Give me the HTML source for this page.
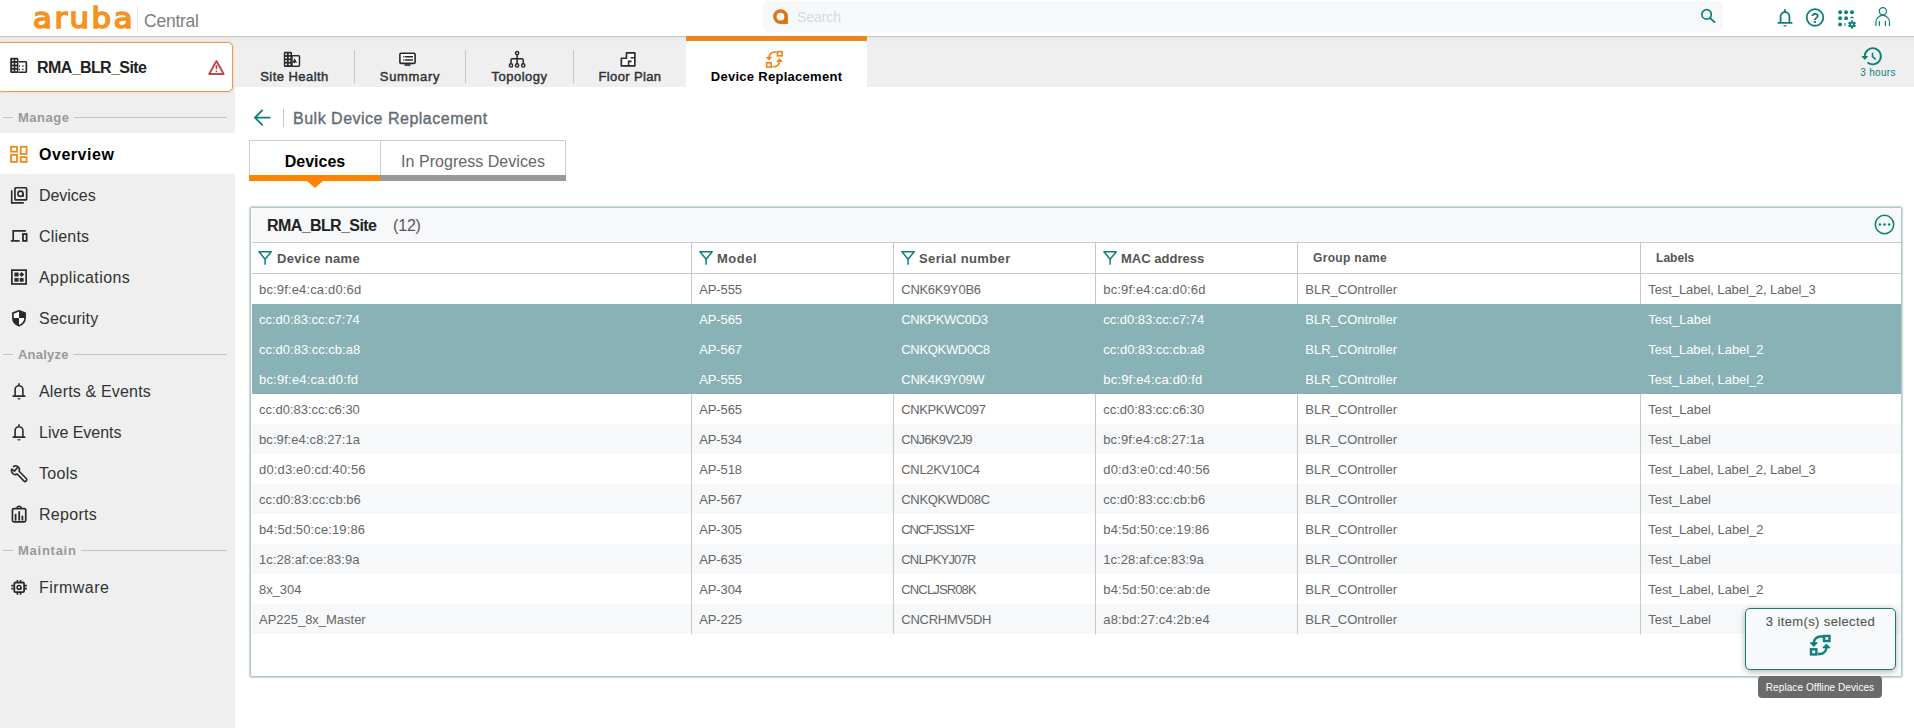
<!DOCTYPE html>
<html lang="en">
<head>
<meta charset="utf-8">
<title>Aruba Central - Bulk Device Replacement</title>
<style>
*{box-sizing:border-box;margin:0;padding:0}
html,body{width:1914px;height:728px;overflow:hidden;background:#fff}
body{font-family:"Liberation Sans",Arial,sans-serif;color:#333;position:relative;font-size:13px}
svg{display:block;overflow:visible}
.abs{position:absolute}
/* header */
#hdr{position:absolute;left:0;top:0;width:1914px;height:37px;background:#fff;border-bottom:1px solid #c4c4c4}
#logo{position:absolute;left:33px;top:0px;font-family:"DejaVu Sans","Liberation Sans",sans-serif;font-weight:normal;font-size:29px;line-height:36px;color:#f6921e;-webkit-text-stroke:1.65px #f6921e;letter-spacing:2.4px;white-space:nowrap;transform:scaleX(1.06);transform-origin:0 0}
#logosep{position:absolute;left:137px;top:6px;width:1px;height:25px;background:#e6e6e6}
#central{position:absolute;left:144px;top:9.6px;font-size:17.5px;line-height:22px;color:#7d7d7d;white-space:nowrap;letter-spacing:-.24px}
#search{position:absolute;left:763px;top:1px;width:960px;height:31px;background:#f6f8fa;border-radius:5px}
#search .ph{position:absolute;left:34px;top:1px;line-height:31px;font-size:14px;color:#d6dade}
/* sidebar */
#side{position:absolute;left:0;top:37px;width:235px;height:691px;background:#efefef linear-gradient(#e5e6e7,#efefef) no-repeat;background-size:100% 4px}
#site{position:absolute;left:-3px;top:5px;width:236px;height:50px;background:#fff;border:1px solid #e99a4a;border-radius:5px;box-shadow:0 0 2px rgba(240,150,58,.55)}
#site .nm{position:absolute;left:39px;top:0;line-height:50px;font-size:16px;font-weight:bold;color:#222;white-space:nowrap}
.sec{position:absolute;left:0;width:235px;height:32px}
.sec i{position:absolute;top:16px;height:1px;background:#c4c4c4}
.sec span{position:absolute;left:18px;top:1px;line-height:32px;font-size:13px;font-weight:bold;color:#999;white-space:nowrap}
.it{position:absolute;left:0;width:235px;height:41px}
.it.on{background:#fff}
.it span{position:absolute;left:39px;top:1px;line-height:41px;font-size:16px;color:#333;white-space:nowrap}
.it.on span{font-weight:bold;color:#000}
.it svg{position:absolute}
/* top tabs */
#tabs{position:absolute;left:235px;top:37px;width:1679px;height:50px;background:#efefef linear-gradient(#e5e6e7,#efefef) no-repeat;background-size:100% 4px}
.tab{position:absolute;top:0;height:50px;text-align:center}
.tab span{position:absolute;left:0;right:0;top:31px;line-height:18px;font-size:13px;font-weight:normal;-webkit-text-stroke:.45px #2f3338;color:#2f3338;white-space:nowrap}
.tab svg{position:absolute}
.tsep{position:absolute;top:13px;width:1px;height:33px;background:#c6c6c6}
#tabon{position:absolute;left:451px;top:-1px;width:181px;height:51px;background:#fff;border-top:5px solid #f08618}
/* main */
#main{position:absolute;left:235px;top:87px;width:1679px;height:641px;background:#fff}
#ttl{position:absolute;left:58px;top:20px;line-height:24px;font-size:16px;color:#636b73;-webkit-text-stroke:.35px #636b73;white-space:nowrap}
#itabs{position:absolute;left:14px;top:53px;width:317px;height:41px;border:1px solid #ccc;border-bottom:none}
#itabs .a{position:absolute;left:0;top:0;width:131px;height:35px;border-right:1px solid #ccc;text-align:center;line-height:42px;font-size:16px;font-weight:bold;color:#000}
#itabs .b{position:absolute;left:131px;top:0;width:184px;height:35px;text-align:center;line-height:42px;font-size:16px;color:#666}
#itabs .ba{position:absolute;left:-1px;top:34px;width:131px;height:6px;background:#ff8300}
#itabs .bb{position:absolute;left:130px;top:34px;width:186px;height:6px;background:#999}
#itabs .tri{position:absolute;left:57px;top:40px;width:0;height:0;border-left:8px solid transparent;border-right:8px solid transparent;border-top:7px solid #ff8300}
/* panel */
#panel{position:absolute;left:250px;top:207px;width:1652px;height:470px;border:1px solid #b4cac9;border-radius:2px;background:#fff;box-shadow:0 0 1px 1px rgba(140,178,177,.5)}
#pin{position:absolute;left:1px;top:0;width:1649px;height:468px}
#ptitle{position:absolute;left:0;top:0;width:1649px;height:35px;background:#f7f8f9;border-bottom:1px solid #c9c9c9}
#ptitle b{position:absolute;left:15px;top:0;line-height:35px;font-size:16px;color:#222;white-space:nowrap}
#ptitle span{position:absolute;left:141px;top:0;line-height:35px;font-size:16px;color:#555;white-space:nowrap}
.th{position:absolute;top:35px;height:31px;border-bottom:1px solid #c9c9c9;border-left:1px solid #c9c9c9;font-size:13px;font-weight:bold;color:#555;line-height:30px;white-space:nowrap}
.th span{position:absolute;top:1px}
.th svg{position:absolute;left:6.5px;top:7px}
.tr{position:absolute;left:0;width:1649px;height:30px;background:#fff}
.tr.alt{background:#f7f8f9}
.tr.sel{background:#88b2b5}
.td{position:absolute;top:0;height:30px;border-left:1px solid #c9c9c9;line-height:30px;font-size:13px;color:#666;white-space:nowrap}
.td span{position:absolute;left:7.3px;top:1px}
.tr.sel .td{color:#fff;border-left-color:transparent}
.c1{left:0;width:439px;border-left:none!important}
.c1 span{left:7px}
.c2{left:439px;width:202px}.c3{left:641px;width:202px}.c4{left:843px;width:202px}.c5{left:1045px;width:343px}.c6{left:1388px;width:261px}
#selbox{position:absolute;left:1745px;top:608px;width:151px;height:62px;background:#f7f9fa;border:1px solid #1a7a70;border-radius:5px;box-shadow:0 2px 6px rgba(0,0,0,.3)}
#selbox span{position:absolute;left:0;right:0;top:4px;text-align:center;line-height:18px;font-size:13px;color:#555;-webkit-text-stroke:.12px #555;white-space:nowrap}
#tip{position:absolute;left:1758px;top:676px;width:124px;height:22px;background:#6a6a6a;border-radius:4px;color:#fff;font-size:10px;line-height:24px;text-align:center;white-space:nowrap}
#hrs{position:absolute;left:1850px;top:67px;width:56px;text-align:center;font-size:10px;line-height:12px;color:#0c8079;white-space:nowrap}
</style>
</head>
<body>
<div id="hdr">
  <div id="logo">aruba</div>
  <div id="logosep"></div>
  <div id="central">Central</div>
  <div id="search">
    <svg class="abs" style="left:9px;top:8px" width="17" height="16" viewBox="0 0 17 16"><path d="M8.500.2a7.400 7.400 0 1 0 0 14.800h7.400V7.600A7.400 7.400 0 0 0 8.500.2zm0 3.500a3.900 3.900 0 1 1 0 7.800 3.900 3.900 0 0 1 0-7.800z" fill="#e07414" fill-rule="evenodd"/></svg>
    <div class="ph" style="letter-spacing:-.06px">Search</div>
    <svg class="abs" style="left:937px;top:8px" width="16" height="16" viewBox="0 0 16 16"><circle cx="6.600" cy="5.400" r="4.700" fill="none" stroke="#0c8079" stroke-width="1.700"/><path d="M9.900 8.900L14.500 13.100" stroke="#0c8079" stroke-width="1.900" stroke-linecap="round"/></svg>
  </div>
  <!-- bell -->
  <svg class="abs" style="left:1777px;top:8px" width="16" height="19" viewBox="0 0 16 19"><path d="M8 1.800v1.200M3.600 14.200V8.400a4.400 4.400 0 0 1 8.800 0v5.800" fill="none" stroke="#0c8079" stroke-width="1.800" stroke-linecap="round"/><path d="M1.300 14.900h13.400" stroke="#0c8079" stroke-width="1.800" stroke-linecap="round"/><path d="M6.200 17.300h3.600c-.3 1-1 1.400-1.800 1.400s-1.500-.4-1.800-1.400z" fill="#0c8079"/></svg>
  <!-- help -->
  <svg class="abs" style="left:1805px;top:8px" width="20" height="20" viewBox="0 0 20 20"><circle cx="10" cy="9.450" r="8.300" fill="none" stroke="#0c8079" stroke-width="1.800"/><text x="10" y="14.700" text-anchor="middle" font-family="Liberation Sans,sans-serif" font-weight="bold" font-size="14" fill="#0c8079">?</text></svg>
  <!-- apps grid -->
  <svg class="abs" style="left:1837px;top:10px" width="20" height="19" viewBox="0 0 20 19"><g fill="#0c8079"><circle cx="3.100" cy="2.300" r="1.950"/><circle cx="9.100" cy="2.300" r="1.950"/><circle cx="15" cy="2.300" r="1.950"/><circle cx="3.100" cy="8.300" r="1.950"/><circle cx="9.100" cy="8.300" r="1.950"/><path d="M13.200 8.200a1.800 1.700 0 0 1 3.600 0z"/><circle cx="3.100" cy="14.500" r="1.950"/><path d="M9 12.700a1.800 1.800 0 0 0 0 3.600c-.9-1-.9-2.600 0-3.600z"/><circle cx="15" cy="14.500" r="2.700"/><path d="M15 10.500v8M11.540 12.500l6.920 4M11.540 16.500l6.920-4" stroke="#0c8079" stroke-width="2.100"/></g><circle cx="15" cy="14.500" r="1.050" fill="#fff"/></svg>
  <!-- user -->
  <svg class="abs" style="left:1874px;top:6px" width="17" height="21" viewBox="0 0 17 21"><circle cx="8.900" cy="5.300" r="3.600" fill="none" stroke="#0c8079" stroke-width="1.200"/><path d="M1.900 19.900v-3.700a6.800 6.800 0 0 1 13.600 0v3.700M5.400 19.900V15M11.400 19.900V15" fill="none" stroke="#0c8079" stroke-width="1.200"/></svg>
</div>

<div id="side">
  <div id="site">
    <svg class="abs" style="left:12px;top:14px" width="18" height="17" viewBox="0 0 18 17"><rect x=".2" y=".8" width="8.200" height="15.200" rx="1.200" fill="#2b2b2b"/><g fill="#fff"><rect x="2.100" y="2.600" width="1.600" height="1.500"/><rect x="5.300" y="2.600" width="1.600" height="1.500"/><rect x="2.100" y="6" width="1.600" height="1.500"/><rect x="5.300" y="6" width="1.600" height="1.500"/><rect x="2.100" y="9.400" width="1.600" height="1.500"/><rect x="5.300" y="9.400" width="1.600" height="1.500"/><rect x="2.100" y="12.800" width="1.600" height="1.500"/><rect x="5.300" y="12.800" width="1.600" height="1.500"/></g><path d="M8.400 4.750h7.200a.75.750 0 0 1 .75.750v9a.75.750 0 0 1-.75.750H8.400" fill="none" stroke="#2b2b2b" stroke-width="1.70"/><g fill="#2b2b2b"><rect x="8.800" y="8.300" width="1.300" height="1.400"/><rect x="12.200" y="8.300" width="1.400" height="1.400"/><rect x="8.800" y="11.700" width="1.300" height="1.400"/><rect x="12.200" y="11.700" width="1.400" height="1.400"/></g></svg>
    <div class="nm" style="letter-spacing:-.60px">RMA_BLR_Site</div>
    <svg class="abs" style="left:209px;top:16px" width="19" height="17" viewBox="0 0 19 17"><path d="M9.450 2L16.700 15H2.200z" fill="none" stroke="#c2484d" stroke-width="1.90" stroke-linejoin="round"/><path d="M9.450 6.100v4.100" stroke="#c2484d" stroke-width="1.70"/><circle cx="9.450" cy="12.300" r=".85" fill="#c2484d"/></svg>
  </div>

  <div class="sec" style="top:64px"><i style="left:3px;width:10px"></i><span style="letter-spacing:.52px">Manage</span><i style="left:74px;width:153px"></i></div>
  <div class="it on" style="top:96px">
    <svg style="left:10px;top:13px" width="18" height="17" viewBox="0 0 18 17"><g fill="none" stroke="#f08a1c" stroke-width="1.80"><rect x="1.050" y=".8" width="5.900" height="4.900"/><rect x="1.050" y="8.800" width="5.900" height="7.100"/><rect x="10.700" y=".8" width="5.900" height="7.200"/><rect x="10.700" y="11.100" width="5.900" height="4.800"/></g></svg>
    <span style="letter-spacing:.53px">Overview</span></div>
  <div class="it" style="top:137px">
    <svg style="left:10px;top:12px" width="18" height="18" viewBox="0 0 18 18"><g fill="none" stroke="#2a2a2a" stroke-width="1.70"><rect x="4.950" y="1.750" width="11.700" height="12.200" rx="1"/><path d="M1.700 4.200v12.700h12.100" stroke-width="1.60"/><circle cx="10.500" cy="7.750" r="2.650" stroke-width="1.60"/><path d="M13.150 7.750v2.900" stroke-width="1.60"/></g></svg>
    <span style="letter-spacing:-.04px">Devices</span></div>
  <div class="it" style="top:178px">
    <svg style="left:10px;top:14px" width="18" height="14" viewBox="0 0 18 14"><g fill="none" stroke="#2a2a2a" stroke-width="1.70"><path d="M3.200 11.200V1.900h12.600"/><path d="M.8 11.900h8.900"/><rect x="13" y="5" width="3.600" height="6.900" stroke-width="1.80"/></g></svg>
    <span style="letter-spacing:.19px">Clients</span></div>
  <div class="it" style="top:219px">
    <svg style="left:10px;top:12px" width="18" height="18" viewBox="0 0 18 18"><rect x="1.850" y="2.150" width="14.300" height="13.800" fill="none" stroke="#2a2a2a" stroke-width="1.70"/><g fill="#2a2a2a"><rect x="4.400" y="4.600" width="4.200" height="3.900" rx=".5"/><rect x="4.400" y="10.100" width="4.200" height="3.600" rx=".5"/><rect x="9.700" y="10.100" width="3.900" height="3.600" rx=".5"/><path d="M11.700 4l2.500 2.500-2.500 2.500-2.500-2.500z"/></g></svg>
    <span style="letter-spacing:.41px">Applications</span></div>
  <div class="it" style="top:260px">
    <svg style="left:11px;top:12px" width="16" height="18" viewBox="0 0 16 18"><path d="M8 1.800l6.100 2.300v4.500c0 3.800-2.500 6.900-6.100 8.200-3.600-1.300-6.100-4.400-6.100-8.200V4.100z" fill="#fff" stroke="#2a2a2a" stroke-width="1.70" stroke-linejoin="round"/><path d="M8 1.800l6.100 2.300v4.800H8zM8 8.900v7.900c-3.600-1.300-6.100-4.400-6.100-7.900z" fill="#2a2a2a"/></svg>
    <span style="letter-spacing:.21px">Security</span></div>

  <div class="sec" style="top:301px"><i style="left:3px;width:10px"></i><span style="letter-spacing:.23px">Analyze</span><i style="left:73px;width:154px"></i></div>
  <div class="it" style="top:333px">
    <svg style="left:12px;top:12px" width="14" height="18" viewBox="0 0 14 18"><path d="M7 1.900v1.200M3.100 13.500V7.600a3.900 3.900 0 0 1 7.800 0v5.900" fill="none" stroke="#2a2a2a" stroke-width="1.60" stroke-linecap="round"/><path d="M1.200 14.050h11.600" stroke="#2a2a2a" stroke-width="1.70" stroke-linecap="round"/><path d="M5.200 16.200h3.600c-.3.900-1 1.400-1.800 1.400s-1.500-.5-1.800-1.400z" fill="#2a2a2a"/></svg>
    <span style="letter-spacing:.17px">Alerts &amp; Events</span></div>
  <div class="it" style="top:374px">
    <svg style="left:12px;top:12px" width="14" height="18" viewBox="0 0 14 18"><path d="M7 1.900v1.200M3.100 13.500V7.600a3.900 3.900 0 0 1 7.800 0v5.900" fill="none" stroke="#2a2a2a" stroke-width="1.60" stroke-linecap="round"/><path d="M1.200 14.050h11.600" stroke="#2a2a2a" stroke-width="1.70" stroke-linecap="round"/><path d="M5.200 16.200h3.600c-.3.900-1 1.400-1.800 1.400s-1.500-.5-1.800-1.400z" fill="#2a2a2a"/></svg>
    <span style="letter-spacing:-.02px">Live Events</span></div>
  <div class="it" style="top:415px">
    <svg style="left:10px;top:12px" width="18" height="18" viewBox="0 0 18 18"><path d="M3.500 2.500A3.850 3.850 0 0 1 9.100 7.300L16.300 14.500A1.700 1.700 0 0 1 13.800 16.900L7.200 10A3.850 3.850 0 0 1 1.800 5.100L4.400 7.100 7.300 3.800" fill="none" stroke="#2a2a2a" stroke-width="1.60" stroke-linejoin="round" stroke-linecap="round"/></svg>
    <span style="letter-spacing:.28px">Tools</span></div>
  <div class="it" style="top:456px">
    <svg style="left:11px;top:12px" width="17" height="18" viewBox="0 0 17 18"><rect x="1.450" y="3.550" width="13.300" height="13.300" rx="1.500" fill="none" stroke="#2a2a2a" stroke-width="1.70"/><path d="M6.100 3.200a2 2 0 0 1 4 0" fill="none" stroke="#2a2a2a" stroke-width="1.60"/><path d="M4.600 9.600v5.200M8.200 7v7.800M11.400 11.500v3.300" stroke="#2a2a2a" stroke-width="1.80" stroke-linecap="round"/></svg>
    <span style="letter-spacing:.30px">Reports</span></div>

  <div class="sec" style="top:497px"><i style="left:3px;width:10px"></i><span style="letter-spacing:.74px">Maintain</span><i style="left:81px;width:146px"></i></div>
  <div class="it" style="top:529px">
    <svg style="left:11px;top:13px" width="17" height="17" viewBox="0 0 17 17"><rect x="3.300" y="3.500" width="9.800" height="9.700" rx="1.200" fill="none" stroke="#2a2a2a" stroke-width="1.80"/><circle cx="8" cy="8.400" r="1.900" fill="none" stroke="#2a2a2a" stroke-width="1.50"/><path d="M9.900 8.400v2.100" stroke="#2a2a2a" stroke-width="1.50"/><path d="M6.400 1v1.700M9.600 1v1.700M6.400 14v1.700M9.600 14v1.700M.3 6.700h2.200M.3 9.700h2.200M13.900 6.700h2M13.900 9.700h2" stroke="#2a2a2a" stroke-width="1.70"/></svg>
    <span style="letter-spacing:.45px">Firmware</span></div>
</div>

<div id="tabs">
  <div id="tabon"></div>
  <div class="tab" style="left:0;width:119px">
    <svg style="left:48px;top:14px" width="18" height="17" viewBox="0 0 18 17"><rect x=".8" y=".7" width="8.200" height="15.200" rx="1.200" fill="#2b2d30"/><g fill="#fff"><rect x="2.200" y="2.500" width="1.700" height="1.500"/><rect x="5.700" y="2.500" width="1.700" height="1.500"/><rect x="2.200" y="5.900" width="1.700" height="1.500"/><rect x="5.700" y="5.900" width="1.700" height="1.500"/><rect x="2.200" y="9.250" width="1.700" height="1.500"/><rect x="5.700" y="9.250" width="1.700" height="1.500"/><rect x="2.200" y="12.600" width="1.700" height="1.500"/><rect x="5.700" y="12.600" width="1.700" height="1.500"/></g><path d="M9 4.650h6.700a.75.750 0 0 1 .75.750v9a.75.750 0 0 1-.75.750H9z" fill="#fff" stroke="#2b2d30" stroke-width="1.500"/><path d="M11.500 7.200l2.700 4.500-1.900-.3-.7 1.200-.9-1.100-1.300.4z" fill="#2b2d30"/></svg>
    <span style="letter-spacing:.45px">Site Health</span></div>
  <div class="tsep" style="left:119px"></div>
  <div class="tab" style="left:120px;width:110px">
    <svg style="left:43px;top:14px" width="19" height="16" viewBox="0 0 19 16"><rect x="1.900" y="2.200" width="15.200" height="10.200" rx="1.200" fill="#fff" stroke="#26282b" stroke-width="1.600"/><path d="M5.200 5.700h1.200M7 5.700h8M5.200 9.100h1.200M7 9.100h8" stroke="#26282b" stroke-width="1.500"/><rect x="6.600" y="13.200" width="5.900" height="1.600" fill="#26282b"/></svg>
    <span style="letter-spacing:.68px">Summary</span></div>
  <div class="tsep" style="left:230px"></div>
  <div class="tab" style="left:231px;width:107px">
    <svg style="left:42px;top:13px" width="19" height="19" viewBox="0 0 19 19"><g fill="none" stroke="#26282b" stroke-width="1.400"><circle cx="9.100" cy="3.100" r="1.650"/><circle cx="3" cy="15.400" r="1.650"/><circle cx="9.100" cy="15.400" r="1.650"/><circle cx="15.200" cy="15.400" r="1.650"/><path d="M9.100 4.800v8.900M3 13.700V10a1.200 1.200 0 0 1 1.200-1.200h9.800a1.200 1.200 0 0 1 1.200 1.200v3.700" stroke-width="1.500"/></g></svg>
    <span style="letter-spacing:.52px">Topology</span></div>
  <div class="tsep" style="left:338px"></div>
  <div class="tab" style="left:339px;width:112px">
    <svg style="left:46px;top:14px" width="17" height="17" viewBox="0 0 17 17"><path d="M6.500 1.850h8.350v13H1.350v-7.600h5.150z" fill="#fff" stroke="#2b2d30" stroke-width="1.700" stroke-linejoin="round"/><path d="M14.850 6.800h-4.300" fill="none" stroke="#2b2d30" stroke-width="1.500"/><path d="M8.600 14.850v-4.450h3" fill="none" stroke="#2b2d30" stroke-width="1.600"/></svg>
    <span style="letter-spacing:.36px">Floor Plan</span></div>
  <div class="tab" style="left:451px;width:181px">
    <svg style="left:79px;top:13px" width="19" height="19" viewBox="0 0 19 19"><g fill="none" stroke="#f08a1c" stroke-width="1.700"><rect x="12.550" y="1.650" width="4.500" height="4.200"/><rect x="1.650" y="12.750" width="4.500" height="4.300"/><path d="M11.700 2.100H9.500a5.500 5.500 0 0 0-5.500 5.500v1.200"/><path d="M1.300 7.300h5.400L4 10z" stroke-width="1" fill="#f08a1c" stroke-linejoin="round"/><path d="M7.400 16.700H9a5.500 5.500 0 0 0 5.500-5.500V10.200"/><path d="M11.800 11.400h5.400L14.500 8.700z" stroke-width="1" fill="#f08a1c" stroke-linejoin="round"/></g></svg>
    <span style="color:#000;font-weight:bold;-webkit-text-stroke:0;letter-spacing:.28px">Device Replacement</span></div>
  <!-- time -->
  <svg class="abs" style="left:1626px;top:10px" width="22" height="19" viewBox="0 0 22 19"><path d="M3.700 9.300A8.100 8.100 0 1 1 6.600 15.500" fill="none" stroke="#0c8079" stroke-width="1.800"/><path d="M.3 9.100h7l-3.500 4z" fill="#0c8079"/><path d="M11.500 5.800v3.900l3.300 2.600" fill="none" stroke="#0c8079" stroke-width="1.600"/></svg>
</div>
<div id="hrs" style="letter-spacing:.30px">3 hours</div>

<div id="main">
  <svg class="abs" style="left:18px;top:22px" width="18" height="18" viewBox="0 0 18 18"><path d="M9.200 1.400L2 8.600l7.200 7.200M2.300 8.600h14.400" fill="none" stroke="#0c8079" stroke-width="1.900" stroke-linecap="round" stroke-linejoin="miter"/></svg>
  <div class="abs" style="left:48px;top:22px;width:1px;height:18px;background:#c8c8c8"></div>
  <div id="ttl" style="letter-spacing:.50px">Bulk Device Replacement</div>
  <div id="itabs">
    <div class="a" style="letter-spacing:.01px">Devices</div>
    <div class="b" style="letter-spacing:.04px">In Progress Devices</div>
    <div class="ba"></div><div class="bb"></div><div class="tri"></div>
  </div>
</div>

<div id="panel"><div id="pin">
  <div id="ptitle"><b style="letter-spacing:-.60px">RMA_BLR_Site</b><span style="letter-spacing:-.17px">(12)</span>
    <svg class="abs" style="left:1621.500px;top:6px" width="21" height="21" viewBox="0 0 21 21"><circle cx="10.500" cy="10.500" r="9.200" fill="none" stroke="#0c8079" stroke-width="1.600"/><circle cx="5.900" cy="10.500" r="1.300" fill="#0c8079"/><circle cx="10.500" cy="10.500" r="1.300" fill="#0c8079"/><circle cx="15.100" cy="10.500" r="1.300" fill="#0c8079"/></svg>
  </div>
  <div class="th" style="left:0;width:439px;border-left:none"><svg width="14" height="15" viewBox="0 0 14 15" style="left:6px"><path d="M1 1.700h12.200L7.100 9.300zM7.100 9v5.800" fill="none" stroke="#0c8079" stroke-width="1.500" stroke-linejoin="round"/></svg><span style="left:25px;letter-spacing:.32px">Device name</span></div>
  <div class="th" style="left:439px;width:202px"><svg width="14" height="15" viewBox="0 0 14 15"><path d="M1 1.700h12.200L7.100 9.300zM7.100 9v5.800" fill="none" stroke="#0c8079" stroke-width="1.500" stroke-linejoin="round"/></svg><span style="left:25px;letter-spacing:.53px">Model</span></div>
  <div class="th" style="left:641px;width:202px"><svg width="14" height="15" viewBox="0 0 14 15"><path d="M1 1.700h12.200L7.100 9.300zM7.100 9v5.800" fill="none" stroke="#0c8079" stroke-width="1.500" stroke-linejoin="round"/></svg><span style="left:25px;letter-spacing:.38px">Serial number</span></div>
  <div class="th" style="left:843px;width:202px"><svg width="14" height="15" viewBox="0 0 14 15"><path d="M1 1.700h12.200L7.100 9.300zM7.100 9v5.800" fill="none" stroke="#0c8079" stroke-width="1.500" stroke-linejoin="round"/></svg><span style="left:25px;letter-spacing:.01px">MAC address</span></div>
  <div class="th" style="left:1045px;width:343px;font-size:12px"><span style="left:15px;top:0;letter-spacing:.33px">Group name</span></div>
  <div class="th" style="left:1388px;width:261px;font-size:12px"><span style="left:15px;top:0;letter-spacing:.05px">Labels</span></div>
<div class="tr " style="top:66px"><div class="td c1"><span style="letter-spacing:.15px">bc:9f:e4:ca:d0:6d</span></div><div class="td c2"><span style="letter-spacing:-.14px">AP-555</span></div><div class="td c3"><span style="letter-spacing:-.30px">CNK6K9Y0B6</span></div><div class="td c4"><span style="letter-spacing:.15px">bc:9f:e4:ca:d0:6d</span></div><div class="td c5"><span style="letter-spacing:-.00px">BLR_COntroller</span></div><div class="td c6"><span style="letter-spacing:-.09px">Test_Label, Label_2, Label_3</span></div></div>
<div class="tr sel" style="top:96px"><div class="td c1"><span style="letter-spacing:-.02px">cc:d0:83:cc:c7:74</span></div><div class="td c2"><span style="letter-spacing:-.14px">AP-565</span></div><div class="td c3"><span style="letter-spacing:-.41px">CNKPKWC0D3</span></div><div class="td c4"><span style="letter-spacing:-.02px">cc:d0:83:cc:c7:74</span></div><div class="td c5"><span style="letter-spacing:-.00px">BLR_COntroller</span></div><div class="td c6"><span style="letter-spacing:-.02px">Test_Label</span></div></div>
<div class="tr sel" style="top:126px"><div class="td c1"><span style="letter-spacing:-.00px">cc:d0:83:cc:cb:a8</span></div><div class="td c2"><span style="letter-spacing:-.14px">AP-567</span></div><div class="td c3"><span style="letter-spacing:-.33px">CNKQKWD0C8</span></div><div class="td c4"><span style="letter-spacing:-.00px">cc:d0:83:cc:cb:a8</span></div><div class="td c5"><span style="letter-spacing:-.00px">BLR_COntroller</span></div><div class="td c6"><span style="letter-spacing:-.07px">Test_Label, Label_2</span></div></div>
<div class="tr sel" style="top:156px"><div class="td c1"><span style="letter-spacing:.18px">bc:9f:e4:ca:d0:fd</span></div><div class="td c2"><span style="letter-spacing:-.14px">AP-555</span></div><div class="td c3"><span style="letter-spacing:-.30px">CNK4K9Y09W</span></div><div class="td c4"><span style="letter-spacing:.18px">bc:9f:e4:ca:d0:fd</span></div><div class="td c5"><span style="letter-spacing:-.00px">BLR_COntroller</span></div><div class="td c6"><span style="letter-spacing:-.07px">Test_Label, Label_2</span></div></div>
<div class="tr " style="top:186px"><div class="td c1"><span style="letter-spacing:-.02px">cc:d0:83:cc:c6:30</span></div><div class="td c2"><span style="letter-spacing:-.14px">AP-565</span></div><div class="td c3"><span style="letter-spacing:-.39px">CNKPKWC097</span></div><div class="td c4"><span style="letter-spacing:-.02px">cc:d0:83:cc:c6:30</span></div><div class="td c5"><span style="letter-spacing:-.00px">BLR_COntroller</span></div><div class="td c6"><span style="letter-spacing:-.02px">Test_Label</span></div></div>
<div class="tr alt" style="top:216px"><div class="td c1"><span style="letter-spacing:.08px">bc:9f:e4:c8:27:1a</span></div><div class="td c2"><span style="letter-spacing:-.14px">AP-534</span></div><div class="td c3"><span style="letter-spacing:-.76px">CNJ6K9V2J9</span></div><div class="td c4"><span style="letter-spacing:.08px">bc:9f:e4:c8:27:1a</span></div><div class="td c5"><span style="letter-spacing:-.00px">BLR_COntroller</span></div><div class="td c6"><span style="letter-spacing:-.02px">Test_Label</span></div></div>
<div class="tr " style="top:246px"><div class="td c1"><span style="letter-spacing:.15px">d0:d3:e0:cd:40:56</span></div><div class="td c2"><span style="letter-spacing:-.14px">AP-518</span></div><div class="td c3"><span style="letter-spacing:-.33px">CNL2KV10C4</span></div><div class="td c4"><span style="letter-spacing:.15px">d0:d3:e0:cd:40:56</span></div><div class="td c5"><span style="letter-spacing:-.00px">BLR_COntroller</span></div><div class="td c6"><span style="letter-spacing:-.09px">Test_Label, Label_2, Label_3</span></div></div>
<div class="tr alt" style="top:276px"><div class="td c1"><span style="letter-spacing:.04px">cc:d0:83:cc:cb:b6</span></div><div class="td c2"><span style="letter-spacing:-.14px">AP-567</span></div><div class="td c3"><span style="letter-spacing:-.33px">CNKQKWD08C</span></div><div class="td c4"><span style="letter-spacing:.04px">cc:d0:83:cc:cb:b6</span></div><div class="td c5"><span style="letter-spacing:-.00px">BLR_COntroller</span></div><div class="td c6"><span style="letter-spacing:-.02px">Test_Label</span></div></div>
<div class="tr " style="top:306px"><div class="td c1"><span style="letter-spacing:.12px">b4:5d:50:ce:19:86</span></div><div class="td c2"><span style="letter-spacing:-.14px">AP-305</span></div><div class="td c3"><span style="letter-spacing:-1.15px">CNCFJSS1XF</span></div><div class="td c4"><span style="letter-spacing:.12px">b4:5d:50:ce:19:86</span></div><div class="td c5"><span style="letter-spacing:-.00px">BLR_COntroller</span></div><div class="td c6"><span style="letter-spacing:-.07px">Test_Label, Label_2</span></div></div>
<div class="tr alt" style="top:336px"><div class="td c1"><span style="letter-spacing:.04px">1c:28:af:ce:83:9a</span></div><div class="td c2"><span style="letter-spacing:-.14px">AP-635</span></div><div class="td c3"><span style="letter-spacing:-.82px">CNLPKYJ07R</span></div><div class="td c4"><span style="letter-spacing:.04px">1c:28:af:ce:83:9a</span></div><div class="td c5"><span style="letter-spacing:-.00px">BLR_COntroller</span></div><div class="td c6"><span style="letter-spacing:-.02px">Test_Label</span></div></div>
<div class="tr " style="top:366px"><div class="td c1"><span style="letter-spacing:-.05px">8x_304</span></div><div class="td c2"><span style="letter-spacing:-.14px">AP-304</span></div><div class="td c3"><span style="letter-spacing:-.86px">CNCLJSR08K</span></div><div class="td c4"><span style="letter-spacing:.17px">b4:5d:50:ce:ab:de</span></div><div class="td c5"><span style="letter-spacing:-.00px">BLR_COntroller</span></div><div class="td c6"><span style="letter-spacing:-.07px">Test_Label, Label_2</span></div></div>
<div class="tr alt" style="top:396px"><div class="td c1"><span style="letter-spacing:-.02px">AP225_8x_Master</span></div><div class="td c2"><span style="letter-spacing:-.14px">AP-225</span></div><div class="td c3"><span style="letter-spacing:-.26px">CNCRHMV5DH</span></div><div class="td c4"><span style="letter-spacing:.14px">a8:bd:27:c4:2b:e4</span></div><div class="td c5"><span style="letter-spacing:-.00px">BLR_COntroller</span></div><div class="td c6"><span style="letter-spacing:-.02px">Test_Label</span></div></div>
</div></div>

<div id="selbox"><span style="letter-spacing:.38px">3 item(s) selected</span>
  <svg class="abs" style="left:63px;top:25px" width="22.800" height="22.800" viewBox="0 0 19 19"><g fill="none" stroke="#0c8079" stroke-width="2"><rect x="12.550" y="1.650" width="4.500" height="4.200"/><rect x="1.650" y="12.750" width="4.500" height="4.300"/><path d="M11.700 2.100H9.500a5.500 5.500 0 0 0-5.500 5.500v1.200"/><path d="M1.300 7.300h5.400L4 10z" stroke-width="1" fill="#0c8079" stroke-linejoin="round"/><path d="M7.400 16.700H9a5.500 5.500 0 0 0 5.500-5.500V10.200"/><path d="M11.800 11.400h5.400L14.500 8.700z" stroke-width="1" fill="#0c8079" stroke-linejoin="round"/></g></svg>
</div>
<div id="tip" style="letter-spacing:.08px">Replace Offline Devices</div>
</body>
</html>
